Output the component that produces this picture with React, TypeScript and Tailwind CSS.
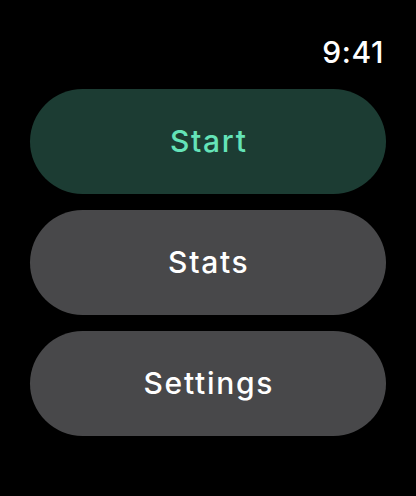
import React from "react";

const items = [
  { label: "Start", primary: true },
  { label: "Stats", primary: false },
  { label: "Settings", primary: false },
];

export default function App() {
  return (
    <div
      className="flex h-[496px] w-[416px] flex-col bg-black px-[30px] pt-[34px] text-white"
      style={{ fontFamily: "Inter, 'Noto Sans', sans-serif" }}
    >
      <div className="flex justify-end pr-[2px]">
        <span className="text-[30px] leading-[36px] font-medium tracking-[0.6px]">9:41</span>
      </div>

      <div className="mt-[19px] flex flex-col gap-4">
        {items.map((item) => (
          <button
            key={item.label}
            type="button"
            className={
              item.primary
                ? "flex h-[105px] w-full items-center justify-center rounded-full bg-[#1c3c33] pl-[1.6px] text-[30px] font-medium tracking-[1.7px] text-[#64e3b8]"
                : "flex h-[105px] w-full items-center justify-center rounded-full bg-[#48484a] pl-[1.6px] text-[30px] font-medium tracking-[1.7px] text-white"
            }
          >
            {item.label}
          </button>
        ))}
      </div>
    </div>
  );
}
